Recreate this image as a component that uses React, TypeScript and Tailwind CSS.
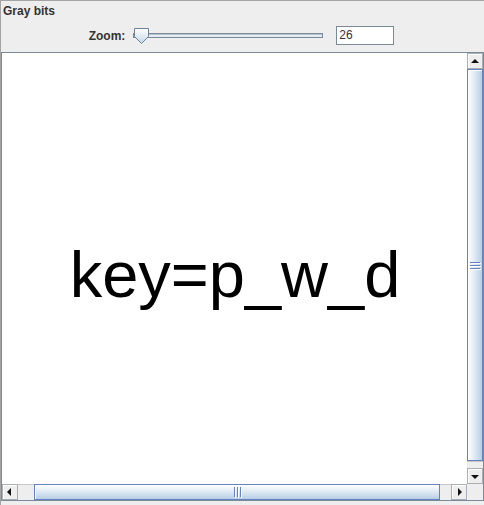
import React from 'react';

const font = { fontFamily: '"Liberation Sans", Arial, sans-serif' };

function ArrowButton({ dir }: { dir: 'up' | 'down' | 'left' | 'right' }) {
  const pts = {
    up: '4,10 12,10 8,6',
    down: '4,7 12,7 8,11',
    left: '9,4 9,12 5,8',
    right: '7,4 7,12 11,8',
  }[dir];
  return (
    <div className="w-[16px] h-[16px] shrink-0 bg-[#eeeeee] border border-[#a9afb5] shadow-[inset_1px_1px_0_#ffffff]">
      <svg width="14" height="14" viewBox="1 1 14 14">
        <polygon points={pts} fill="#111111" />
      </svg>
    </div>
  );
}

function SliderThumb() {
  return (
    <svg width="15" height="16" viewBox="0 0 15 16" className="shrink-0">
      <defs>
        <linearGradient id="th" x1="0" y1="0" x2="0" y2="1">
          <stop offset="0" stopColor="#ffffff" />
          <stop offset="1" stopColor="#c4d6e8" />
        </linearGradient>
      </defs>
      <polygon points="0.5,0.5 14.5,0.5 14.5,8.5 7.5,15.5 0.5,8.5" fill="url(#th)" stroke="#6f8296" />
    </svg>
  );
}

export default function App() {
  return (
    <div className="w-[484px] h-[505px] bg-[#eeeeee] border-l border-t border-[#a4a4a4] flex flex-col overflow-hidden" style={font}>
      <div className="h-[19px] pl-[2px] pt-[3px] text-[12px] font-bold text-[#333333] leading-[14px]">Gray bits</div>

      <div className="h-[32px] flex items-center justify-center pb-[1px] pr-[4px]">
        <span className="text-[12px] font-bold text-[#333333] mr-[8px] ml-[2px]">Zoom:</span>
        <div className="relative w-[190px] h-[16px] flex items-center">
          <div className="absolute left-0 right-0 top-[5px] h-[5px] border border-[#7a8a99] bg-[#e4ebf2] shadow-[inset_1px_1px_0_#b8c4d0]" />
          <div className="absolute left-[1px] top-0">
            <SliderThumb />
          </div>
        </div>
        <div className="ml-[13px] w-[58px] h-[19px] bg-white border border-[#7a8a99] text-[12px] text-[#333333] pl-[2px] leading-[17px]">26</div>
      </div>

      <div className="w-[483px] h-[449px] border border-[#7a8a99] bg-white grid grid-cols-[1fr_16px] grid-rows-[1fr_16px]">
        <div className="bg-white flex justify-center pt-[189px] pl-[1px]">
          <span className="text-[65px] leading-none text-black whitespace-nowrap">key=p_w_d</span>
        </div>

        <div className="flex flex-col bg-[#eeeeee]">
          <ArrowButton dir="up" />
          <div className="h-[392px] border border-[#6382bf] bg-gradient-to-r from-[#ffffff] via-[#dde8f3] to-[#b8cfe5] shadow-[inset_1px_1px_0_#ffffff] flex flex-col items-center justify-center gap-[2px]">
            <div className="w-[10px] h-[1px] bg-[#6382bf] shadow-[1px_1px_0_#ffffff]" />
            <div className="w-[10px] h-[1px] bg-[#6382bf] shadow-[1px_1px_0_#ffffff]" />
            <div className="w-[10px] h-[1px] bg-[#6382bf] shadow-[1px_1px_0_#ffffff]" />
          </div>
          <div className="flex-1 border-t border-[#c8c8c8]" />
          <ArrowButton dir="down" />
        </div>

        <div className="flex bg-[#eeeeee]">
          <ArrowButton dir="left" />
          <div className="w-[16px] border-t border-[#c8c8c8]" />
          <div className="w-[406px] border border-[#6382bf] bg-gradient-to-b from-[#ffffff] via-[#dde8f3] to-[#b8cfe5] shadow-[inset_1px_1px_0_#ffffff] flex items-center justify-center gap-[2px]">
            <div className="w-[1px] h-[10px] bg-[#6382bf] shadow-[1px_1px_0_#ffffff]" />
            <div className="w-[1px] h-[10px] bg-[#6382bf] shadow-[1px_1px_0_#ffffff]" />
            <div className="w-[1px] h-[10px] bg-[#6382bf] shadow-[1px_1px_0_#ffffff]" />
          </div>
          <div className="flex-1 border-t border-[#c8c8c8]" />
          <ArrowButton dir="right" />
        </div>

        <div className="bg-[#eeeeee]" />
      </div>
    </div>
  );
}
